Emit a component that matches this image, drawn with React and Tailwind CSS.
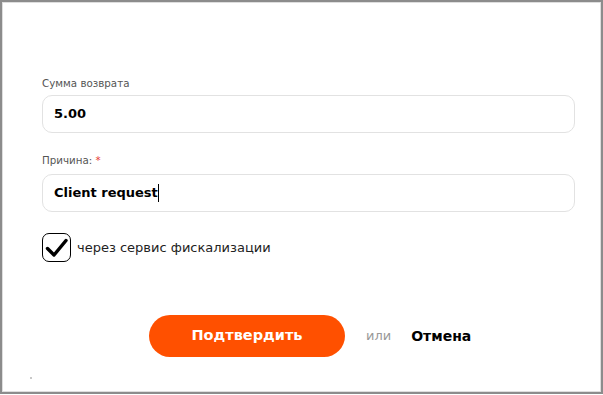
import React from "react"

export default function App() {
  const font = { fontFamily: '"DejaVu Sans", Verdana, sans-serif' }

  return (
    <div className="w-[603px] h-[395px] bg-white" style={font}>
      <div className="w-[603px] h-[394px] border-2 border-[#8c8c8c]">
        <div className="h-full border border-[#dedede] pl-[39px] pt-[74px]">
          <div className="text-[10.3px] leading-[13px] text-[#555]">Сумма возврата</div>
          <div className="mt-[5px] w-[533px] h-[38px] rounded-[10px] border border-[#e2e2e2] px-[11px] flex items-center">
            <span className="text-[13px] font-bold text-black">5.00</span>
          </div>

          <div className="mt-[21px] text-[10.3px] leading-[13px] text-[#555]">
            Причина: <span className="text-[#e53935]">*</span>
          </div>
          <div className="mt-[7px] w-[533px] h-[38px] rounded-[10px] border border-[#e2e2e2] px-[11px] flex items-center">
            <span className="text-[13px] font-bold text-black">Client request</span>
            <span className="w-px h-[18px] bg-black" />
          </div>

          <div className="mt-[21px] flex items-center gap-[6px]">
            <div className="w-[29px] h-[29px] rounded-[7px] border-[1.5px] border-black flex items-center justify-center">
              <svg width="24" height="24" viewBox="0 0 24 24" fill="none">
                <path d="M2.5 12.5 L9 19 L21 4.5" stroke="black" strokeWidth="3.4" strokeLinecap="round" strokeLinejoin="round" />
              </svg>
            </div>
            <span className="text-[13px] text-[#222]">через сервис фискализации</span>
          </div>

          <div className="mt-[53px] ml-[107px] flex items-center">
            <button className="w-[196px] h-[42px] rounded-full bg-[#ff5000] text-white text-[14.5px] font-bold">
              Подтвердить
            </button>
            <span className="ml-[21px] text-[13px] text-[#999]">или</span>
            <span className="ml-[20px] text-[14px] font-bold text-black">Отмена</span>
          </div>

          <div className="mt-[20px] -ml-[12px] w-[2px] h-[2px] bg-[#c8c8c8]" />
        </div>
      </div>
    </div>
  )
}
